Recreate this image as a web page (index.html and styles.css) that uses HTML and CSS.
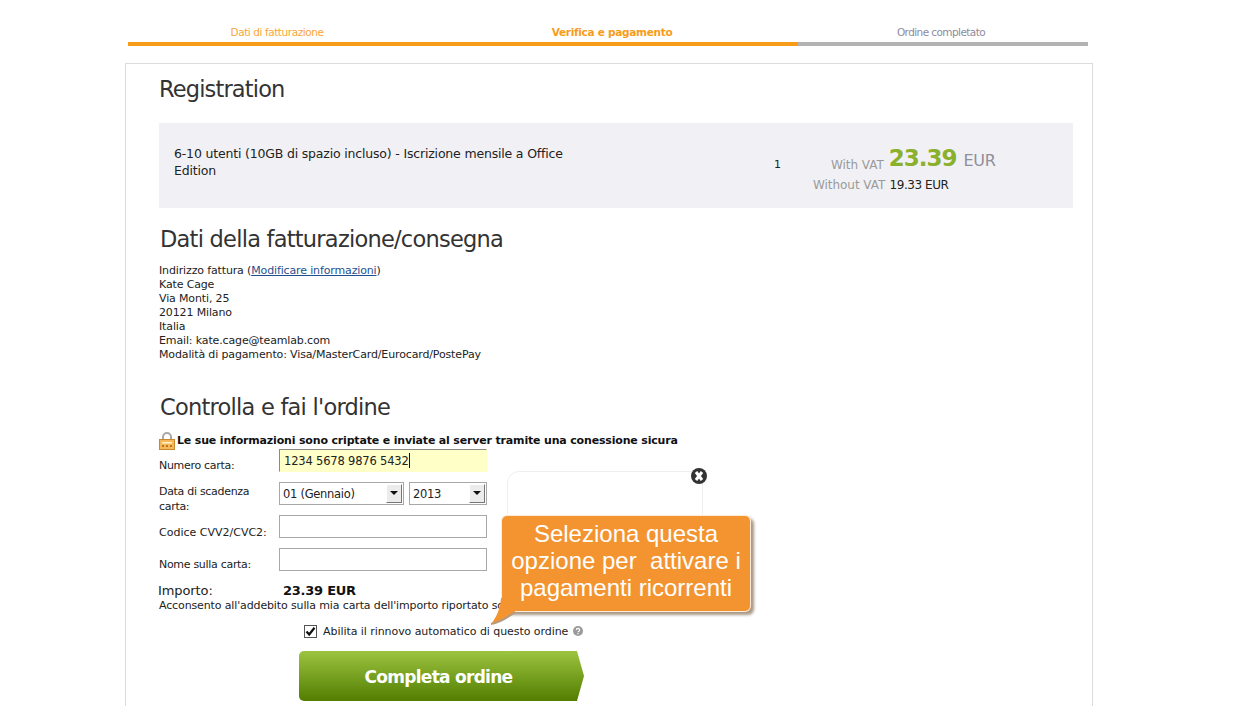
FILE: index.html
```html
<!DOCTYPE html>
<html lang="it">
<head>
<meta charset="utf-8">
<title>Verifica e pagamento</title>
<link rel="stylesheet" href="styles.css">
</head>
<body>
<div class="page">
  <div class="steps">
    <div class="step step-done">Dati di fatturazione</div>
    <div class="step step-current">Verifica e pagamento</div>
    <div class="step step-next">Ordine completato</div>
  </div>
  <main class="card">
    <h1 class="title-reg">Registration</h1>
    <section class="summary">
      <div class="summary-name">6-10 utenti (10GB di spazio incluso) - Iscrizione mensile a Office Edition</div>
      <div class="summary-qty">1</div>
      <div class="summary-price">
        <div class="price-vat"><span class="muted muted-low">With VAT</span> <span class="price-big">23.39</span> <span class="price-cur">EUR</span></div>
        <div class="price-novat"><span class="muted">Without VAT</span> <span class="price-net">19.33 EUR</span></div>
      </div>
    </section>
    <h2 class="title-bill">Dati della fatturazione/consegna</h2>
    <div class="address">
      <div>Indirizzo fattura (<a href="#" class="link">Modificare informazioni</a>)</div>
      <div>Kate Cage</div>
      <div>Via Monti, 25</div>
      <div>20121 Milano</div>
      <div>Italia</div>
      <div>Email: kate.cage@teamlab.com</div>
      <div>Modalità di pagamento: Visa/MasterCard/Eurocard/PostePay</div>
    </div>
    <h2 class="title-order">Controlla e fai l'ordine</h2>
    <div class="secure">
      <svg class="lock" width="16" height="18" viewBox="0 0 16 18" aria-hidden="true">
        <path d="M4 8V5a4 4 0 0 1 8 0v3" fill="none" stroke="#a9a9a9" stroke-width="2"/>
        <rect x="0.5" y="7.5" width="15" height="10" fill="#f5b95a" stroke="#c98a2c"/>
        <rect x="3" y="10" width="10" height="1.5" fill="#fff1c9"/>
        <rect x="3" y="13" width="2" height="2" fill="#b5761f"/>
        <rect x="7" y="13" width="2" height="2" fill="#b5761f"/>
        <rect x="11" y="13" width="2" height="2" fill="#b5761f"/>
      </svg>
      <span>Le sue informazioni sono criptate e inviate al server tramite una conessione sicura</span>
    </div>
    <div class="form">
      <div class="row row-num">
        <label class="lbl">Numero carta:</label>
        <div class="field field-active">1234 5678 9876 5432<span class="caret"></span></div>
      </div>
      <div class="row row-date">
        <label class="lbl lbl-two">Data di scadenza carta:</label>
        <div class="selects">
          <div class="select select-month"><span>01 (Gennaio)</span><i class="sel-btn"></i></div>
          <div class="select select-year"><span>2013</span><i class="sel-btn"></i></div>
        </div>
      </div>
      <div class="row row-cvv">
        <label class="lbl">Codice CVV2/CVC2:</label>
        <div class="field"></div>
      </div>
      <div class="row row-name">
        <label class="lbl lbl-low">Nome sulla carta:</label>
        <div class="field"></div>
      </div>
    </div>
    <div class="amount"><span class="amount-lbl">Importo:</span><b class="amount-val">23.39 EUR</b></div>
    <div class="consent">Acconsento all'addebito sulla mia carta dell'importo riportato sopra</div>
    <div class="renew">
      <span class="check"><svg width="11" height="11" viewBox="0 0 11 11" aria-hidden="true"><path d="M1.5 5.5 4.2 8.5 9.5 1.8" fill="none" stroke="#111" stroke-width="2.2"/></svg></span>
      <span>Abilita il rinnovo automatico di questo ordine</span>
      <svg class="help" width="10" height="10" viewBox="0 0 10 10" aria-hidden="true"><circle cx="5" cy="5" r="5" fill="#9a9a9a"/><path d="M3.4 3.9a1.6 1.5 0 1 1 2.4 1.3c-.6.3-.8.6-.8 1.1" fill="none" stroke="#fff" stroke-width="1.2"/><rect x="4.4" y="7.1" width="1.2" height="1.2" fill="#fff"/></svg>
    </div>
    <button class="submit" type="button">Completa ordine</button>

    <div class="popup"></div>
    <svg class="close" width="18" height="18" viewBox="0 0 18 18" aria-hidden="true"><circle cx="9" cy="9" r="8" fill="#333"/><path d="M6 5 12 13M12 5 6 13" stroke="#fff" stroke-width="3"/></svg>
    <div class="callout">
      <svg class="tail" width="26" height="30" viewBox="0 0 26 30" aria-hidden="true"><path d="M11 0 C10 12 6 20 1 26 C8 25 17 20 25 14 L25 0Z" fill="#f39430"/><path d="M1 26 C8 25 17 20 25 14" fill="none" stroke="#b59a7e" stroke-width="2"/></svg>
      Seleziona questa opzione per&nbsp; attivare i pagamenti ricorrenti
    </div>
  </main>
</div>
</body>
</html>
```
FILE: styles.css
```css
html, body {
  margin: 0;
  padding: 0;
  height: 706px;
  overflow: hidden;
  background: #fff;
}
.page {
  font-family: "DejaVu Sans", sans-serif;
  font-size: 11px;
  letter-spacing: -0.14px;
  color: #222;
  width: 1238px;
  height: 706px;
  overflow: hidden;
}
.steps {
  display: grid;
  grid-template-columns: 298px 372px 290px;
  width: 960px;
  margin-left: 128px;
  padding-top: 25px;
  height: 21px;
}
.step {
  text-align: center;
  font-size: 10.5px;
  line-height: 14px;
  border-bottom: 4px solid #f79c19;
  height: 17px;
}
.step-done { color: #f9a53a; letter-spacing: -0.43px; }
.step-current { color: #f79c19; font-weight: bold; letter-spacing: -0.28px; }
.step-next { color: #8f8a9e; border-bottom-color: #b3b3b3; letter-spacing: -0.58px; padding-right: 4px; }

.card {
  position: relative;
  box-sizing: border-box;
  width: 968px;
  height: 643px;
  margin: 17px 0 0 125px;
  border: 1px solid #dcdcdc;
  border-bottom: 0;
  padding: 0 19px 0 33px;
}
h1, h2 {
  font-weight: normal;
  margin: 0;
  color: #333;
  font-size: 22.5px;
  letter-spacing: -0.76px;
}
.title-reg { line-height: 30px; padding-top: 10px; letter-spacing: -0.85px; }
.summary {
  display: flex;
  box-sizing: border-box;
  height: 85px;
  margin-top: 19px;
  background: #f1f1f5;
  padding: 22px 0 0 15px;
}
.summary-name {
  width: 400px;
  font-size: 12.5px;
  line-height: 17px;
  letter-spacing: -0.18px;
}
.summary-qty { margin: 13px 0 0 200px; width: 30px; line-height: 14px; }
.summary-price { margin: 0 0 0 27px; }
.muted { color: #9a9a9a; font-size: 12px; letter-spacing: -0.05px; }
.muted-low { transform: translateY(3px); }
.price-vat { display: flex; align-items: baseline; gap: 5px; height: 31px; }
.price-big { color: #8ab02c; font-size: 23px; font-weight: bold; letter-spacing: -1px; }
.price-cur { color: #8f8f9b; font-size: 16px; margin-left: 2px; letter-spacing: -0.3px; }
.price-novat { margin-left: -18px; line-height: 18px; }
.price-net { font-size: 12px; margin-left: 1px; letter-spacing: -0.45px; }
.title-bill { margin-top: 16px; padding-left: 1px; line-height: 30px; }
.address { margin-top: 10px; line-height: 14px; }
.link { color: #1f4f8f; text-decoration: underline; }
.title-order { margin-top: 30px; padding-left: 1px; line-height: 30px; }
.secure {
  display: flex;
  align-items: center;
  gap: 2px;
  margin-top: 10px;
  height: 17px;
  font-weight: bold;
  color: #111;
  letter-spacing: -0.17px;
}
.lock { flex: none; }
.row {
  display: grid;
  grid-template-columns: 120px 208px;
  height: 33px;
  align-items: start;
}
.lbl { padding-top: 10px; line-height: 14px; letter-spacing: -0.3px; }
.lbl-two { padding-top: 2px; line-height: 15px; }
.lbl-low { padding-top: 10px; }
.row-cvv .lbl { padding-top: 11px; letter-spacing: 0; }
.field {
  box-sizing: border-box;
  height: 23px;
  border: 1px solid #a8a8a8;
  background: #fff;
  padding-left: 4px;
  line-height: 23px;
  font-size: 11.5px;
  letter-spacing: -0.18px;
  color: #222;
}
.field-active {
  background: #ffffc8;
  border-color: #8a8a8a #ffffc8 #ffffc8 #8a8a8a;
}
.caret {
  display: inline-block;
  width: 1px;
  height: 15px;
  background: #111;
  vertical-align: -3px;
}
.selects { display: flex; justify-content: space-between; }
.select {
  box-sizing: border-box;
  display: flex;
  justify-content: space-between;
  align-items: center;
  height: 23px;
  border: 1px solid #a8a8a8;
  padding: 1px 1px 1px 3px;
  line-height: 21px;
  font-size: 11.5px;
  letter-spacing: -0.28px;
}
.select span { position: relative; top: 1px; }
.select-month { width: 125px; }
.select-year { width: 78px; }
.sel-btn {
  position: relative;
  box-sizing: border-box;
  width: 16px;
  height: 19px;
  background: #ececec;
  border: 1px solid;
  border-color: #fff #777 #777 #fff;
}
.sel-btn::after {
  content: "";
  position: absolute;
  left: 3px;
  top: 6px;
  border: 4px solid transparent;
  border-top: 4px solid #111;
  border-bottom: 0;
}
.amount {
  display: grid;
  grid-template-columns: 124px auto;
  margin-top: 1px;
  height: 17px;
  line-height: 17px;
}
.amount-lbl { font-size: 13px; letter-spacing: -0.1px; margin-left: -1px; }
.amount-val { font-size: 13px; color: #111; letter-spacing: -0.25px; }
.consent { line-height: 13px; white-space: nowrap; letter-spacing: -0.13px; }
.renew {
  display: flex;
  align-items: center;
  margin: 12px 0 0 145px;
  height: 14px;
  gap: 6px;
  letter-spacing: -0.06px;
}
.check {
  box-sizing: border-box;
  display: flex;
  align-items: center;
  justify-content: center;
  width: 13px;
  height: 13px;
  border: 1px solid #555;
  background: #fff;
}
.help { margin-left: -1px; }
.submit {
  display: block;
  width: 285px;
  height: 50px;
  margin: 13px 0 0 140px;
  padding: 2px 6px 0 0;
  border: 0;
  border-radius: 5px 0 0 5px;
  background: linear-gradient(#9cc440, #527d00);
  clip-path: polygon(0 0, 278px 0, 285px 50%, 278px 100%, 0 100%);
  color: #fff;
  font-family: "DejaVu Sans", sans-serif;
  font-size: 17px;
  font-weight: bold;
  letter-spacing: -0.72px;
}
.popup {
  position: absolute;
  left: 381px;
  top: 407px;
  width: 194px;
  height: 120px;
  border: 1px solid #eee;
  border-radius: 12px;
  background: #fff;
}
.close { position: absolute; left: 564px; top: 403px; }
.callout {
  position: absolute;
  left: 376px;
  top: 452px;
  box-sizing: border-box;
  width: 248px;
  height: 95px;
  padding: 4px 2px 0;
  background: #f39430;
  border-radius: 5px;
  box-shadow: 0 0 0 1px #fdebd8, 3px 3px 3px 1px #a89886;
  color: #fff;
  font-family: "Liberation Sans", sans-serif;
  font-size: 24px;
  letter-spacing: 0;
  line-height: 27px;
  text-align: center;
}
.tail { position: absolute; left: -12px; top: 82px; }
```
